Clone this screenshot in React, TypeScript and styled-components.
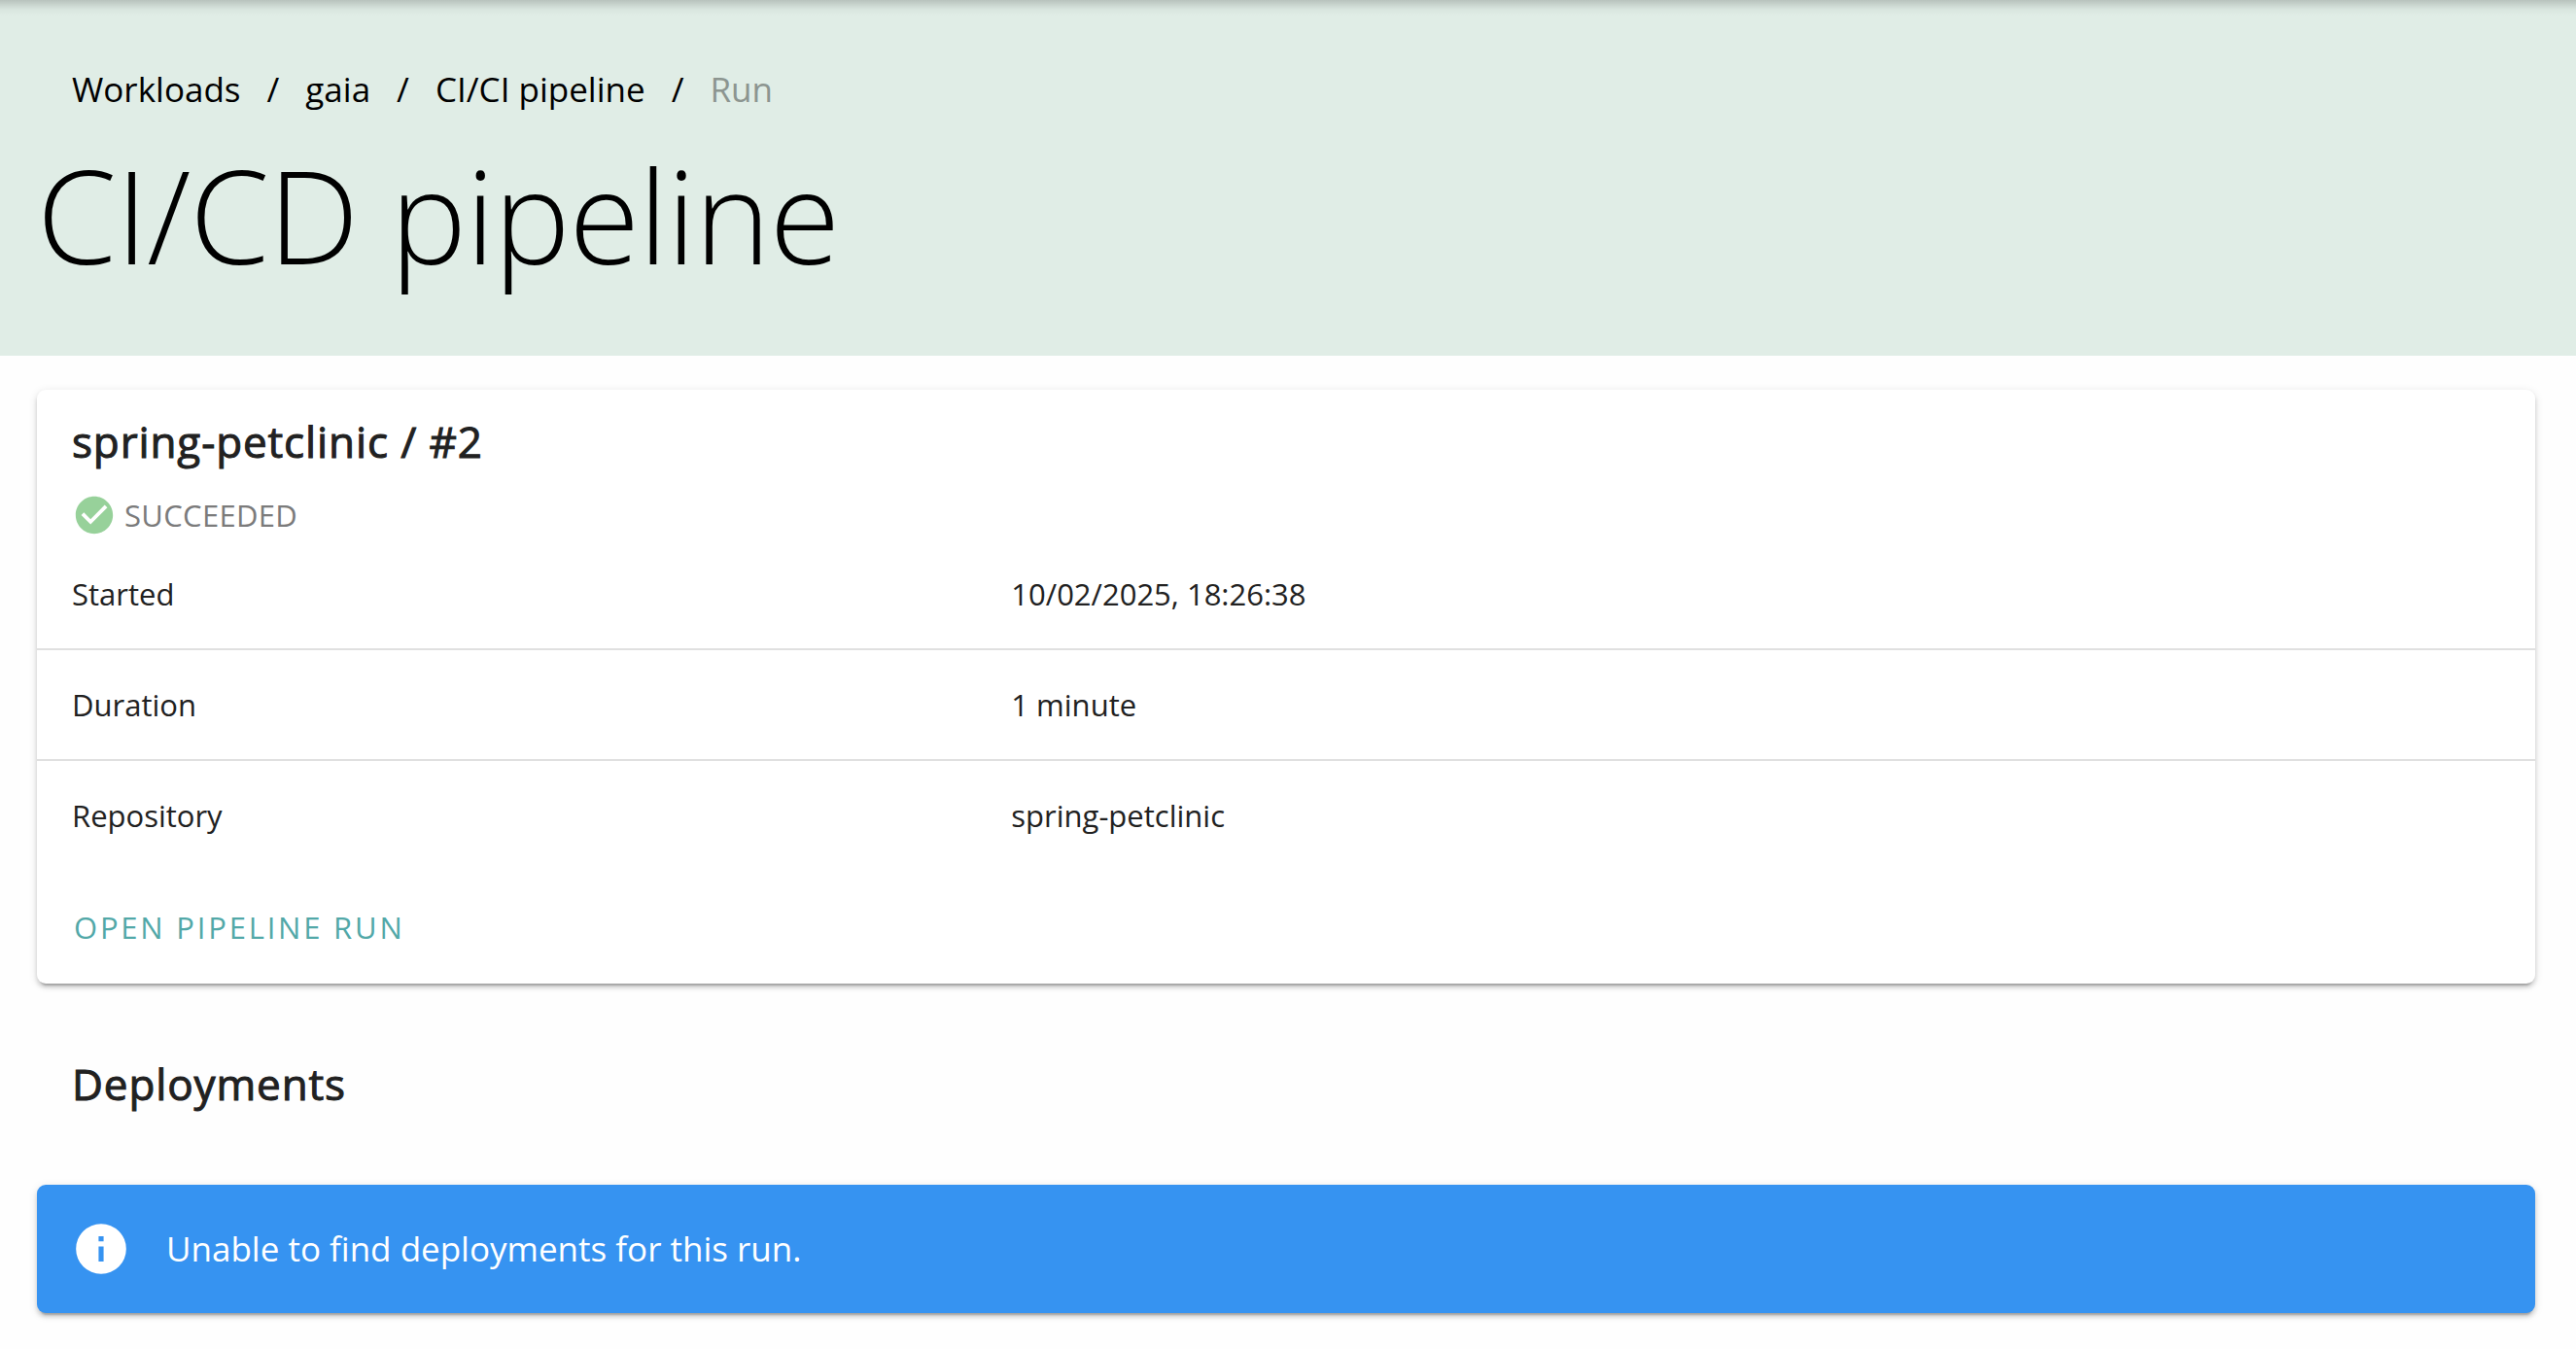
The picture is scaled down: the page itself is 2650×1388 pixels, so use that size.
import React from "react";
import styled, { createGlobalStyle } from "styled-components";

const GlobalStyle = createGlobalStyle`
  *, *::before, *::after { box-sizing: border-box; }
  body {
    margin: 0;
    background: #fefefe;
    color: #212121;
    font-family: "Open Sans", "Noto Sans", sans-serif;
    font-size: 31px;
    line-height: 48px;
  }
  h1, h2, p, ol { margin: 0; }
`;

const elevation = `
  0 6px 2px -4px rgba(0, 0, 0, 0.2),
  0 4px 4px 0 rgba(0, 0, 0, 0.14),
  0 2px 10px 0 rgba(0, 0, 0, 0.12)
`;

const PageHeader = styled.header`
  padding: 65px 38px 77px;
  color: #000;
  background: linear-gradient(
      rgba(0, 0, 0, 0.18) 0,
      rgba(0, 0, 0, 0.1) 5px,
      rgba(0, 0, 0, 0.03) 10px,
      rgba(0, 0, 0, 0) 16px
    )
    #e0ede6;
`;

const Breadcrumbs = styled.ol`
  display: flex;
  flex-wrap: wrap;
  padding: 0 36px;
  list-style: none;
  font-size: 35px;
  line-height: 54px;
`;

const Crumb = styled.li`
  & + &::before {
    content: "/";
    padding: 0 27px;
  }
`;

const CrumbLink = styled.a`
  color: inherit;
  text-decoration: none;
`;

const CurrentPage = styled.span`
  color: #8c9590;
`;

const PageTitle = styled.h1`
  padding-top: 34px;
  font-size: 132px;
  line-height: 136px;
  font-weight: 300;
  letter-spacing: -1px;
`;

const Content = styled.main`
  padding: 35px 42px 36px 38px;
`;

const Card = styled.section`
  padding-bottom: 18px;
  border-radius: 9px;
  background: #fff;
  box-shadow: ${elevation};
`;

const SectionTitle = styled.h2`
  font-size: 44px;
  line-height: 72px;
  font-weight: 500;
  letter-spacing: 0.02em;
  -webkit-text-stroke: 1px currentColor;
`;

const CardHead = styled.div`
  padding: 17px 36px 0;
`;

const Status = styled.p`
  display: flex;
  align-items: center;
  gap: 8px;
  padding: 16px 0 1px;
  color: #7b7b7b;
  letter-spacing: 0.01em;
`;

const Details = styled.table`
  width: 100%;
  border-collapse: separate;
  border-spacing: 0;
`;

const Row = styled.tr`
  &:not(:last-child) > * {
    border-bottom: 2px solid #e0e0e0;
  }
`;

const Label = styled.th`
  width: 37.6%;
  padding: 32px 36px;
  font-weight: 400;
  text-align: left;
`;

const Value = styled.td`
  padding: 32px 36px;
`;

const Actions = styled.div`
  display: flex;
  padding: 18px 18px 0;
`;

const TextButton = styled.button`
  height: 81px;
  padding: 0 20px;
  border: 0;
  border-radius: 9px;
  background: none;
  color: #52a8a8;
  font: inherit;
  font-weight: 500;
  letter-spacing: 0.09em;
  text-transform: uppercase;
  cursor: pointer;
`;

const SectionHead = styled.div`
  padding: 67px 36px 68px;
`;

const Alert = styled.div`
  display: flex;
  align-items: center;
  gap: 36px;
  padding: 35px;
  border-radius: 9px;
  background: #3693f1;
  box-shadow: ${elevation};
  color: #fff;
  font-size: 35px;
  line-height: 54px;
`;

const Icon = styled.svg<{ $size: number; $color: string }>`
  flex: none;
  width: ${(p) => p.$size}px;
  height: ${(p) => p.$size}px;
  fill: ${(p) => p.$color};
`;

const crumbs = ["Workloads", "gaia", "CI/CI pipeline"];

const details = [
  ["Started", "10/02/2025, 18:26:38"],
  ["Duration", "1 minute"],
  ["Repository", "spring-petclinic"],
];

export default function App() {
  return (
    <>
      <GlobalStyle />
      <PageHeader>
        <nav aria-label="Breadcrumb">
          <Breadcrumbs>
            {crumbs.map((name) => (
              <Crumb key={name}>
                <CrumbLink href="#">{name}</CrumbLink>
              </Crumb>
            ))}
            <Crumb>
              <CurrentPage aria-current="page">Run</CurrentPage>
            </Crumb>
          </Breadcrumbs>
        </nav>
        <PageTitle>CI/CD pipeline</PageTitle>
      </PageHeader>
      <Content>
        <Card>
          <CardHead>
            <SectionTitle>spring-petclinic / #2</SectionTitle>
            <Status>
              <Icon $size={46} $color="#97d19a" viewBox="0 0 24 24" aria-hidden="true">
                <path d="M12 2C6.5 2 2 6.5 2 12S6.5 22 12 22 22 17.5 22 12 17.5 2 12 2M10 17L5 12L6.41 10.59L10 14.17L17.59 6.58L19 8L10 17Z" />
              </Icon>
              SUCCEEDED
            </Status>
          </CardHead>
          <Details>
            <tbody>
              {details.map(([label, value]) => (
                <Row key={label}>
                  <Label scope="row">{label}</Label>
                  <Value>{value}</Value>
                </Row>
              ))}
            </tbody>
          </Details>
          <Actions>
            <TextButton type="button">Open pipeline run</TextButton>
          </Actions>
        </Card>
        <SectionHead>
          <SectionTitle>Deployments</SectionTitle>
        </SectionHead>
        <Alert role="status">
          <Icon $size={62} $color="#fff" viewBox="0 0 24 24" aria-hidden="true">
            <path d="M13,9H11V7H13M13,17H11V11H13M12,2A10,10 0 0,0 2,12A10,10 0 0,0 12,22A10,10 0 0,0 22,12A10,10 0 0,0 12,2Z" />
          </Icon>
          Unable to find deployments for this run.
        </Alert>
      </Content>
    </>
  );
}
